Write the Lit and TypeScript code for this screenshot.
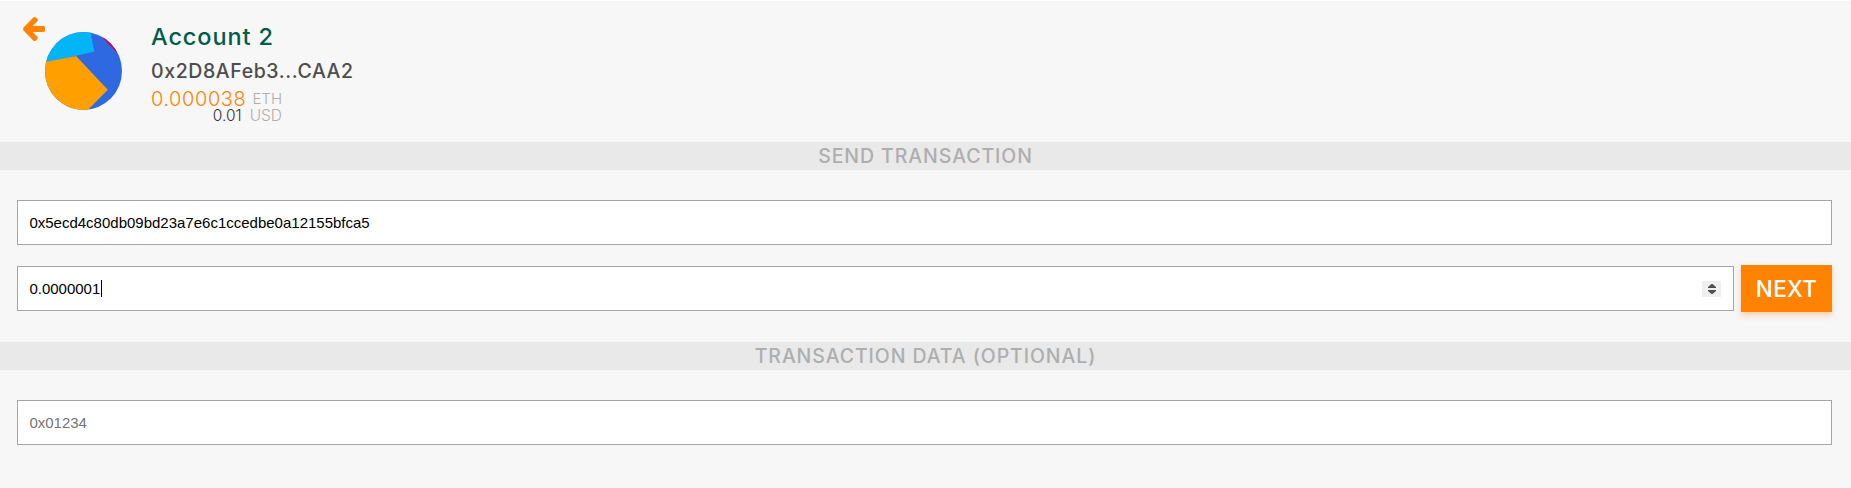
import { LitElement, html, css } from "lit";
import { customElement, state } from "lit/decorators.js";

@customElement("account-avatar")
class AccountAvatar extends LitElement {
  static styles = css`
    :host { display: block; width: 77px; height: 78px; }
    .pic { display: block; }
  `;
  render() {
    return html`<svg class="pic" width="77" height="78" viewBox="0 0 77 78">
      <defs><clipPath id="disc"><ellipse cx="38.5" cy="39" rx="38.5" ry="39" /></clipPath></defs>
      <g clip-path="url(#disc)">
        <rect width="77" height="78" fill="#2f69e2" />
        <path d="M0 -2H45.2L49.2 19.8L0 30.4Z" fill="#03b5f7" />
        <path d="M-1 30.3L31 24L62.8 57.7L42 78.8H-1Z" fill="#ffa000" />
        <path d="M53 1L74 23L77 0Z" fill="#d0055d" />
      </g>
    </svg>`;
  }
}

@customElement("section-bar")
class SectionBar extends LitElement {
  static styles = css`
    :host {
      display: block; height: 28px; text-align: center;
      background: #e9e9e9; color: #aeaeae;
      font: 500 19.5px/28px Inter, sans-serif; letter-spacing: 0.92px;
    }
  `;
  render() {
    return html`<slot></slot>`;
  }
}

@customElement("app-root")
class AppRoot extends LitElement {
  static styles = css`
    :host {
      display: block; box-sizing: border-box; height: 488px; background: #f7f7f7;
      border-top: 1px solid #fff; font-family: Inter, sans-serif; overflow: hidden;
    }
    .header { display: flex; height: 141px; box-sizing: border-box; padding: 16px 0 0 23px; }
    .back { width: 22px; height: 24px; flex: none; }
    .back svg { display: block; }
    account-avatar { margin-top: 15px; flex: none; }
    .info { margin-left: 29px; padding-top: 5px; }
    .name { font-size: 23.5px; font-weight: 500; line-height: 30px; color: #025c4b; letter-spacing: 0.9px; }
    .address { margin-top: 5px; font-size: 19.5px; font-weight: 500; line-height: 28px; color: #4d4d4d; letter-spacing: 0.6px; white-space: nowrap; }
    .balance { width: 131px; }
    .row { display: flex; justify-content: flex-end; align-items: flex-start; font-weight: 300; white-space: nowrap; }
    .eth { height: 21px; line-height: 28px; }
    .usd { height: 18px; line-height: 20px; }
    .amount { font-size: 20px; color: #ff8300; letter-spacing: 0.6px; }
    .fiat { font-size: 15.5px; color: #333; margin-right: 1px; }
    .unit { font-size: 15.5px; color: #aeaeae; margin-left: 7px; }
    .eth .unit { font-size: 15px; margin-left: 6px; }
    .form { padding: 30px 19px 0 17px; box-sizing: border-box; height: 172px; }
    .field {
      box-sizing: border-box; height: 45px; border: 1px solid #a5a5a5; background: #fff;
      display: flex; align-items: center; padding: 0 12px 0 11.4px; color: #000;
      font: 15px/17px "Liberation Sans", Arial, sans-serif;
    }
    .line { display: flex; align-items: flex-start; margin-top: 20px; }
    .line .field { flex: 1; margin-top: 1px; }
    .caret { width: 1px; height: 17px; margin-left: 0.6px; background: #000; }
    .spin { margin-left: auto; width: 19px; height: 16px; background: #efefef; }
    .spin svg { display: block; }
    .next {
      width: 91px; height: 47px; margin-left: 7px; padding: 0; border: 0; background: #ff8300; color: #fff;
      font: 500 22.5px/46px Inter, sans-serif; letter-spacing: 0.3px;
      box-shadow: 0 3px 6px rgba(247, 134, 28, 0.36);
    }
    .hint { color: #757575; }
  `;
  @state() recipient = "0x5ecd4c80db09bd23a7e6c1ccedbe0a12155bfca5";
  @state() amount = "0.0000001";

  render() {
    return html`
      <div class="header">
        <div class="back">
          <svg width="22" height="24" viewBox="64 181 1472 1558" preserveAspectRatio="none">
            <path fill="#ff8300" d="M1536 896v128q0 53-32.5 90.5t-84.5 37.5h-704l293 294q38 36 38 90t-38 90l-75 76q-37 37-90 37-52 0-91-37l-651-652q-37-37-37-90 0-52 37-91l651-650q38-38 91-38 52 0 90 38l75 74q38 38 38 91t-38 91l-293 293h704q52 0 84.5 37.5t32.5 90.5z" />
          </svg>
        </div>
        <account-avatar></account-avatar>
        <div class="info">
          <div class="name">Account 2</div>
          <div class="address">0x2D8AFeb3...CAA2</div>
          <div class="balance">
            <div class="row eth"><span class="amount">0.000038</span><span class="unit">ETH</span></div>
            <div class="row usd"><span class="fiat">0.01</span><span class="unit">USD</span></div>
          </div>
        </div>
      </div>
      <section-bar>SEND TRANSACTION</section-bar>
      <div class="form">
        <div class="field">${this.recipient}</div>
        <div class="line">
          <div class="field">
            <span>${this.amount}</span><span class="caret"></span>
            <span class="spin"><svg width="19" height="16" viewBox="0 0 19 16" fill="#505050"><path d="M6 7V6L9.5 3H10.5L14 6V7ZM6 9H14V10L10.5 13H9.5L6 10Z" /></svg></span>
          </div>
          <button class="next">NEXT</button>
        </div>
      </div>
      <section-bar>TRANSACTION DATA (OPTIONAL)</section-bar>
      <div class="form"><div class="field hint">0x01234</div></div>
    `;
  }
}
